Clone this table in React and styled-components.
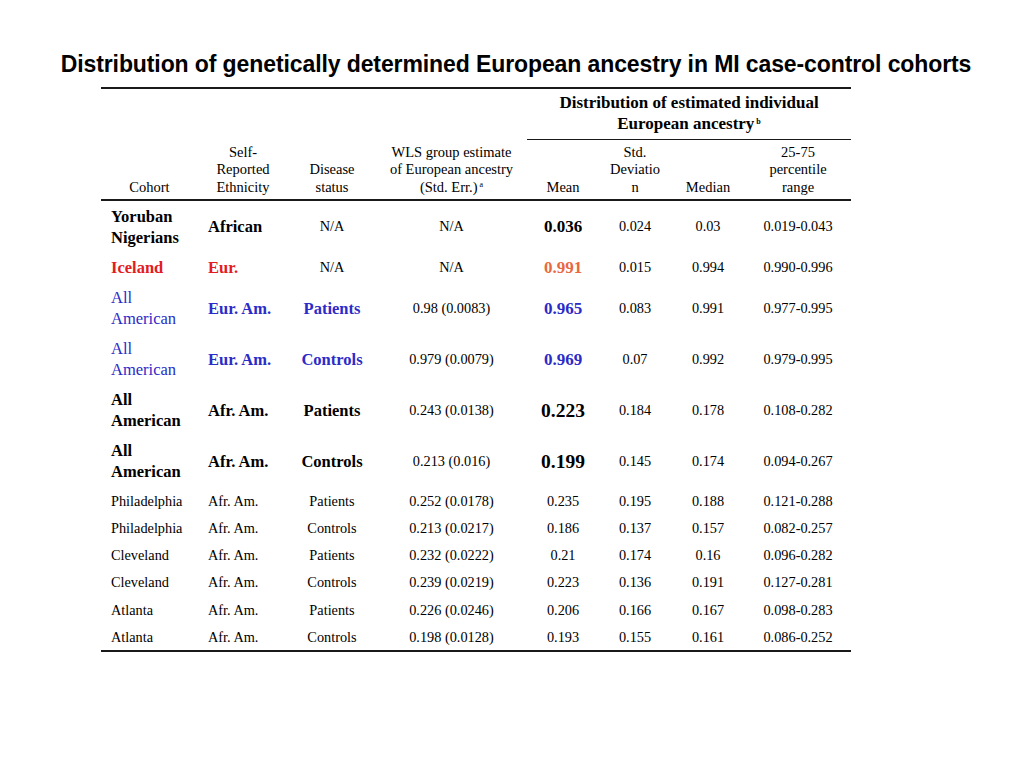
import styled, { createGlobalStyle } from "styled-components";

const GlobalStyle = createGlobalStyle`
  html, body {
    margin: 0;
    padding: 0;
    background: #ffffff;
  }
  body {
    font-family: "Liberation Serif", "Times New Roman", serif;
    color: #000;
  }
`;

const colors = {
  black: "#000000",
  red: "#e31c23",
  blue: "#2b2bc8",
  orange: "#e8693f",
};

const Page = styled.div`
  width: 1024px;
  height: 768px;
  padding-top: 50px;
  box-sizing: border-box;
`;

const Title = styled.h1`
  margin: 0 0 9px 0;
  text-align: center;
  font-family: "Liberation Sans", Arial, sans-serif;
  font-weight: bold;
  font-size: 23px;
  line-height: 28px;
  letter-spacing: -0.1px;
  padding-left: 8px;
`;

const Table = styled.table`
  margin-left: 101px;
  width: 750px;
  table-layout: fixed;
  border-collapse: collapse;
`;

const GroupRow = styled.tr`
  border-top: 2px solid #1a1a1a;
`;

const GroupHead = styled.th`
  padding: 3px 0 5px;
  font-weight: bold;
  font-size: 17px;
  line-height: 21px;
  text-align: center;
  vertical-align: top;
  border-bottom: 1.5px solid #1a1a1a;
`;

const LabelRow = styled.tr`
  border-bottom: 2px solid #1a1a1a;
`;

const Label = styled.th`
  height: 56px;
  padding: 0 0 3px;
  font-weight: normal;
  font-size: 14.5px;
  line-height: 17.5px;
  text-align: center;
  vertical-align: bottom;
`;

const Sup = styled.sup`
  font-size: 8px;
  line-height: 0;
  vertical-align: 5px;
  margin-left: 2px;
`;

const Row = styled.tr`
  height: ${(p) => p.$h}px;
  border-bottom: ${(p) => (p.$last ? "2px solid #1a1a1a" : "none")};
`;

const Cell = styled.td`
  padding: 0 0 0 ${(p) => (p.$left ? "10px" : "0")};
  text-align: ${(p) => (p.$left ? "left" : "center")};
  vertical-align: middle;
  white-space: pre-line;
  color: ${(p) => colors[p.$tone || "black"]};
  font-weight: ${(p) => (p.$bold ? "bold" : "normal")};
  font-size: ${(p) => p.$size || 14.3}px;
  line-height: ${(p) => (p.$size ? 21 : 17)}px;
`;

const cols = [97, 90, 88, 151, 72, 72, 74, 106];

// big = cohort/ethnicity/status in large type, mean = bold mean value, s = small regular
const big = (text, tone, bold = true) => ({ text, tone, bold, size: 16.5 });
const mean = (text, tone, size = 17) => ({ text, tone, bold: true, size });
const s = (text) => ({ text });

const rows = [
  {
    h: 52,
    cells: [big("Yoruban\nNigerians"), big("African"), s("N/A"), s("N/A"), mean("0.036"), s("0.024"), s("0.03"), s("0.019-0.043")],
  },
  {
    h: 30,
    cells: [big("Iceland", "red"), big("Eur.", "red"), s("N/A"), s("N/A"), mean("0.991", "orange"), s("0.015"), s("0.994"), s("0.990-0.996")],
  },
  {
    h: 52,
    cells: [big("All\nAmerican", "blue", false), big("Eur. Am.", "blue"), big("Patients", "blue"), s("0.98 (0.0083)"), mean("0.965", "blue"), s("0.083"), s("0.991"), s("0.977-0.995")],
  },
  {
    h: 50,
    cells: [big("All\nAmerican", "blue", false), big("Eur. Am.", "blue"), big("Controls", "blue"), s("0.979 (0.0079)"), mean("0.969", "blue"), s("0.07"), s("0.992"), s("0.979-0.995")],
  },
  {
    h: 52,
    cells: [big("All\nAmerican"), big("Afr. Am."), big("Patients"), s("0.243 (0.0138)"), mean("0.223", "black", 19.5), s("0.184"), s("0.178"), s("0.108-0.282")],
  },
  {
    h: 50,
    cells: [big("All\nAmerican"), big("Afr. Am."), big("Controls"), s("0.213 (0.016)"), mean("0.199", "black", 19.5), s("0.145"), s("0.174"), s("0.094-0.267")],
  },
  { h: 30, cells: ["Philadelphia", "Afr. Am.", "Patients", "0.252 (0.0178)", "0.235", "0.195", "0.188", "0.121-0.288"].map(s) },
  { h: 25, cells: ["Philadelphia", "Afr. Am.", "Controls", "0.213 (0.0217)", "0.186", "0.137", "0.157", "0.082-0.257"].map(s) },
  { h: 28, cells: ["Cleveland", "Afr. Am.", "Patients", "0.232 (0.0222)", "0.21", "0.174", "0.16", "0.096-0.282"].map(s) },
  { h: 27, cells: ["Cleveland", "Afr. Am.", "Controls", "0.239 (0.0219)", "0.223", "0.136", "0.191", "0.127-0.281"].map(s) },
  { h: 28, cells: ["Atlanta", "Afr. Am.", "Patients", "0.226 (0.0246)", "0.206", "0.166", "0.167", "0.098-0.283"].map(s) },
  { h: 27, cells: ["Atlanta", "Afr. Am.", "Controls", "0.198 (0.0128)", "0.193", "0.155", "0.161", "0.086-0.252"].map(s) },
];

export default function App() {
  return (
    <Page>
      <GlobalStyle />
      <Title>Distribution of genetically determined European ancestry in MI case-control cohorts</Title>
      <Table>
        <colgroup>
          {cols.map((w, i) => (
            <col key={i} style={{ width: w }} />
          ))}
        </colgroup>
        <thead>
          <GroupRow>
            <th colSpan={4} />
            <GroupHead colSpan={4}>
              Distribution of estimated individual
              <br />
              European ancestry<Sup>b</Sup>
            </GroupHead>
          </GroupRow>
          <LabelRow>
            <Label>Cohort</Label>
            <Label>
              Self-
              <br />
              Reported
              <br />
              Ethnicity
            </Label>
            <Label>
              Disease
              <br />
              status
            </Label>
            <Label>
              WLS group estimate
              <br />
              of European ancestry
              <br />
              (Std. Err.)<Sup>a</Sup>
            </Label>
            <Label>Mean</Label>
            <Label>
              Std.
              <br />
              Deviatio
              <br />n
            </Label>
            <Label>Median</Label>
            <Label>
              25-75
              <br />
              percentile
              <br />
              range
            </Label>
          </LabelRow>
        </thead>
        <tbody>
          {rows.map((r, i) => (
            <Row key={i} $h={r.h} $last={i === rows.length - 1}>
              {r.cells.map((c, j) => (
                <Cell
                  key={j}
                  $left={j < 2}
                  $tone={c.tone}
                  $bold={c.bold}
                  $size={c.size}
                >
                  {c.text}
                </Cell>
              ))}
            </Row>
          ))}
        </tbody>
      </Table>
    </Page>
  );
}
